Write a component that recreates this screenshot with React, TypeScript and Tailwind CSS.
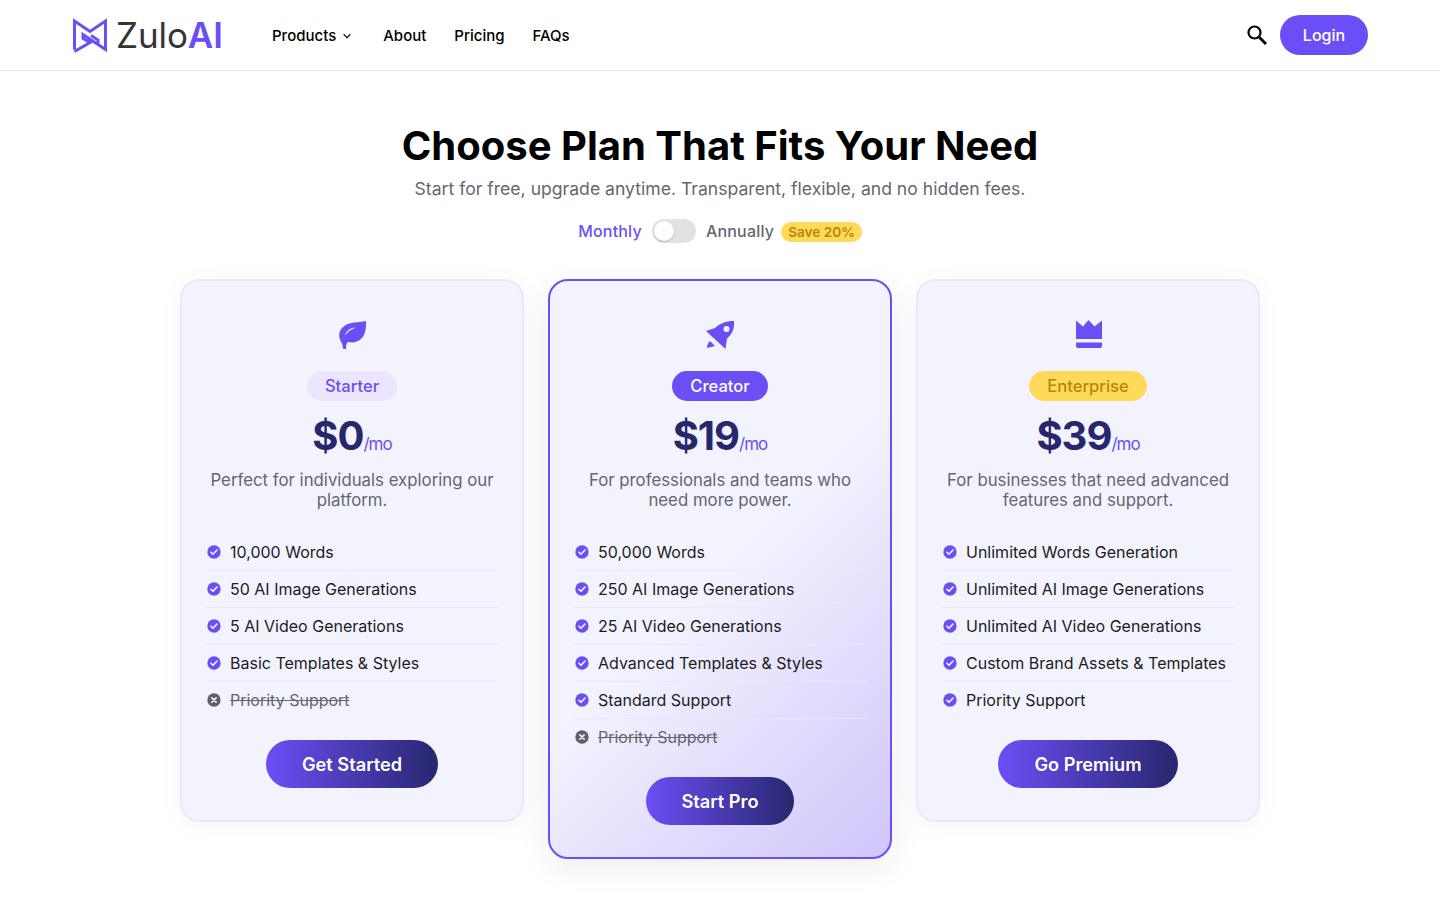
import React from "react";

const Check = () => (
  <svg viewBox="0 0 24 24" className="w-[16px] h-[16px] shrink-0" aria-hidden="true">
    <circle cx="12" cy="12" r="10" fill="#6c4ef6" />
    <path d="M7.5 12.3l3 3 6-6.2" fill="none" stroke="#fff" strokeWidth="2.2" strokeLinecap="round" strokeLinejoin="round" />
  </svg>
);

const Cross = () => (
  <svg viewBox="0 0 24 24" className="w-[16px] h-[16px] shrink-0" aria-hidden="true">
    <circle cx="12" cy="12" r="10" fill="#5f5f68" />
    <path d="M8.8 8.8l6.4 6.4M15.2 8.8l-6.4 6.4" fill="none" stroke="#fff" strokeWidth="2.2" strokeLinecap="round" />
  </svg>
);

const Leaf = () => (
  <svg viewBox="0 0 30 30" className="w-[30px] h-[30px]" aria-hidden="true">
    <path fill="#6c4ef6" fillRule="evenodd" d="M29 1c.4 8-1 14-5 18-3.500 3.300-8 4-13 3-1.500 1-2 3-2 7H6.200c-.4-2-.8-4-1.200-5.500C1.500 18 1 12.500 5 8c2.500-3 7-5 12-5.500C21 2 25 2 29 1zM19 7.500c-5 .3-9.500 2.500-11 8 2.500-3.500 6-6.500 11-8z" />
  </svg>
);

const Rocket = () => (
  <svg viewBox="0 0 30 30" className="w-[30px] h-[30px]" aria-hidden="true">
    <path fill="#6c4ef6" fillRule="evenodd" d="M29 1c.6 7-1.500 13-7 17.500l-1.500 10.500L1 11l9-3C15 3 22 .8 29 1zM21.500 6a3 3 0 100 6 3 3 0 000-6zM5 21l5 5-8 2c.3-3 1-5.500 3-7z" />
  </svg>
);

const Crown = () => (
  <svg viewBox="0 0 30 30" className="w-[30px] h-[30px]" aria-hidden="true">
    <path fill="#6c4ef6" d="M3 .5L10 6.500 15.500 0l6 6.500L29 .5V19H3zM3 22.500h26V26a2 2 0 01-2 2H5a2 2 0 01-2-2z" />
  </svg>
);

type Feature = { t: string; off?: boolean };

const plans: {
  key: string;
  icon: React.ReactNode;
  badge: string;
  badgeClass: string;
  price: string;
  desc: string;
  features: Feature[];
  cta: string;
  featured?: boolean;
}[] = [
  {
    key: "s",
    icon: <Leaf />,
    badge: "Starter",
    badgeClass: "bg-[#ebe6fd] text-[#6c4ef6]",
    price: "$0",
    desc: "Perfect for individuals exploring our platform.",
    features: [
      { t: "10,000 Words" },
      { t: "50 AI Image Generations" },
      { t: "5 AI Video Generations" },
      { t: "Basic Templates & Styles" },
      { t: "Priority Support", off: true },
    ],
    cta: "Get Started",
  },
  {
    key: "c",
    icon: <Rocket />,
    badge: "Creator",
    badgeClass: "bg-[#6c4ef6] text-white",
    price: "$19",
    desc: "For professionals and teams who need more power.",
    features: [
      { t: "50,000 Words" },
      { t: "250 AI Image Generations" },
      { t: "25 AI Video Generations" },
      { t: "Advanced Templates & Styles" },
      { t: "Standard Support" },
      { t: "Priority Support", off: true },
    ],
    cta: "Start Pro",
    featured: true,
  },
  {
    key: "e",
    icon: <Crown />,
    badge: "Enterprise",
    badgeClass: "bg-[#ffd95a] text-[#b8860b]",
    price: "$39",
    desc: "For businesses that need advanced features and support.",
    features: [
      { t: "Unlimited Words Generation" },
      { t: "Unlimited AI Image Generations" },
      { t: "Unlimited AI Video Generations" },
      { t: "Custom Brand Assets & Templates" },
      { t: "Priority Support" },
    ],
    cta: "Go Premium",
  },
];

export default function App() {
  return (
    <div className="min-h-[900px] bg-white font-['Inter',sans-serif] text-black">
      <header className="h-[71px] border-b border-[#e5e5e5] flex items-center pl-[72px] pr-[72px]">
        <div className="flex items-center w-[200px]">
          <svg viewBox="0 0 36 36" className="w-[36px] h-[36px] shrink-0" aria-hidden="true">
            <path fill="none" stroke="#6c4ef6" strokeWidth="3" strokeLinejoin="miter" d="M2.500 32.500V4L18 14.500 33.500 4v28.500L11 17.500v4l7 4-15.500 9M26 27.500v-4.500l-7-4.500" />
          </svg>
          <span className="ml-[8px] text-[35px] leading-none tracking-[-0.1px] text-[#333338] font-normal">
            Zulo<span className="text-[#6c4ef6] font-semibold">AI</span>
          </span>
        </div>
        <nav className="mt-[2px] flex items-center text-[15px] font-medium text-black">
          <span className="flex items-center">
            Products
            <svg viewBox="0 0 12 12" className="w-[10px] h-[10px] ml-[6px]" aria-hidden="true">
              <path d="M2 4l4 4 4-4" fill="none" stroke="#222" strokeWidth="1.700" />
            </svg>
          </span>
          <span className="ml-[31px]">About</span>
          <span className="ml-[28px]">Pricing</span>
          <span className="ml-[28px]">FAQs</span>
        </nav>
        <div className="ml-auto flex items-center">
          <svg viewBox="0 0 24 24" className="w-[24px] h-[24px]" aria-hidden="true">
            <circle cx="9.500" cy="9.500" r="6" fill="none" stroke="#000" strokeWidth="2.200" />
            <path d="M14 14l7 7" stroke="#000" strokeWidth="2.800" />
          </svg>
          <button className="ml-[11px] w-[88px] h-[40px] rounded-full bg-[#6c4ef6] text-white text-[16px] font-medium">
            Login
          </button>
        </div>
      </header>

      <main className="flex flex-col items-center">
        <h1 className="mt-[50px] text-[40px] leading-[50px] font-bold text-black">
          Choose Plan That Fits Your Need
        </h1>
        <p className="mt-[6px] text-[17.6px] leading-[24px] text-[#666670]">
          Start for free, upgrade anytime. Transparent, flexible, and no hidden fees.
        </p>
        <div className="mt-[18px] flex items-center h-[24px] text-[16px] tracking-[0.2px]">
          <span className="font-medium text-[#6c4ef6]">Monthly</span>
          <span className="ml-[10px] w-[44px] h-[24px] rounded-full bg-[#e2e2e2] flex items-center pl-[2px]">
            <span className="w-[20px] h-[20px] rounded-full bg-white shadow-[0_1px_2px_rgba(0,0,0,0.2)]" />
          </span>
          <span className="ml-[10px] font-medium text-[#66666c]">Annually</span>
          <span className="ml-[7px] mt-[2px] h-[20px] px-[7px] rounded-full bg-[#ffd95a] text-[#b8860b] text-[13.6px] leading-[20px] font-semibold tracking-normal">
            Save 20%
          </span>
        </div>

        <div className="mt-[36px] flex items-start gap-[24px]">
          {plans.map((p) => (
            <div
              key={p.key}
              className={
                p.featured
                  ? "w-[344px] rounded-[20px] border-2 border-[#6c4ef6] bg-[linear-gradient(135deg,#f3f3fe_0%,#f3f3fe_50%,#d0c5fb_100%)] shadow-[0_8px_32px_rgba(0,0,0,0.08)] px-[24px] pt-[39px] pb-[32px] flex flex-col items-center"
                  : "w-[344px] rounded-[20px] border-2 border-[#ebe8fc] bg-[#f3f3fe] shadow-[0_4px_24px_rgba(108,78,246,0.06)] px-[24px] pt-[39px] pb-[32px] flex flex-col items-center"
              }
            >
              <div className="h-[30px]">{p.icon}</div>
              <span className={`mt-[21px] h-[30px] px-[18px] rounded-full text-[16.6px] leading-[30px] font-medium ${p.badgeClass}`}>
                {p.badge}
              </span>
              <div className="mt-[8px] h-[54px] flex items-baseline tracking-[-1px]">
                <span className="text-[40px] leading-[54px] font-bold text-[#27276e]">{p.price}</span>
                <span className="text-[17px] text-[#6c4ef6]">/mo</span>
              </div>
              <p className="mt-[7px] w-[292px] text-center text-[16.8px] leading-[20px] text-[#666670]">{p.desc}</p>
              <ul className="mt-[24px] w-full">
                {p.features.map((f, i) => (
                  <li
                    key={f.t}
                    className={`h-[37px] flex items-center border-b ${i < p.features.length - 1 ? "border-[#eae8fb]" : "border-transparent"}`}
                  >
                    {f.off ? <Cross /> : <Check />}
                    <span className={`ml-[8px] text-[16px] ${f.off ? "line-through text-[#666670]" : "text-[#1c1c22]"}`}>
                      {f.t}
                    </span>
                  </li>
                ))}
              </ul>
              <button className="mt-[21px] h-[48px] px-[36px] pt-[1px] rounded-full bg-[linear-gradient(90deg,#6c4ef6,#27276e)] text-white text-[18.2px] font-semibold">
                {p.cta}
              </button>
            </div>
          ))}
        </div>
      </main>
    </div>
  );
}
